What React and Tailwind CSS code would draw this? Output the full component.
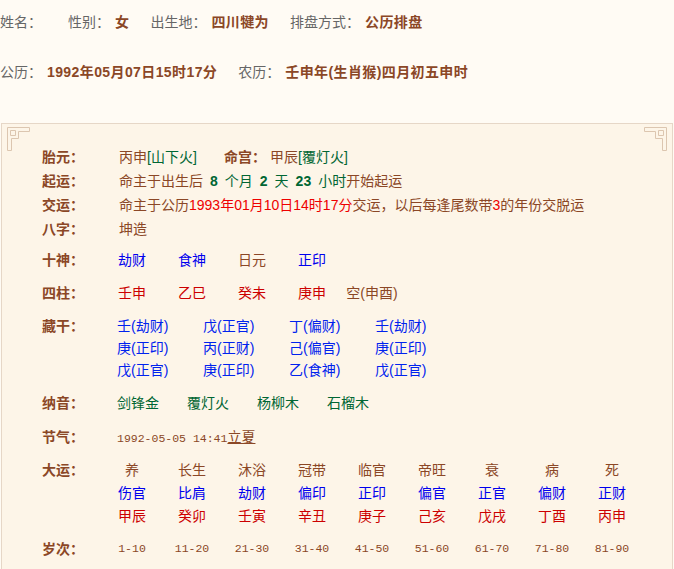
import React from 'react';

const BROWN = 'text-[#8b4726]';
const MONO = "font-['Liberation_Mono','Noto_Sans_CJK_SC',monospace]";

const shishen = ['劫财', '食神', '日元', '正印'];
const sizhu = ['壬申', '乙巳', '癸未', '庚申'];
const canggan = [
    ['壬(劫财)', '庚(正印)', '戊(正官)'],
    ['戊(正官)', '丙(正财)', '庚(正印)'],
    ['丁(偏财)', '己(偏官)', '乙(食神)'],
    ['壬(劫财)', '庚(正印)', '戊(正官)'],
];
const nayin = ['剑锋金', '覆灯火', '杨柳木', '石榴木'];
const dayun = [
    { stage: '养', god: '伤官', gz: '甲辰', age: '1-10' },
    { stage: '长生', god: '比肩', gz: '癸卯', age: '11-20' },
    { stage: '沐浴', god: '劫财', gz: '壬寅', age: '21-30' },
    { stage: '冠带', god: '偏印', gz: '辛丑', age: '31-40' },
    { stage: '临官', god: '正印', gz: '庚子', age: '41-50' },
    { stage: '帝旺', god: '偏官', gz: '己亥', age: '51-60' },
    { stage: '衰', god: '正官', gz: '戊戌', age: '61-70' },
    { stage: '病', god: '偏财', gz: '丁酉', age: '71-80' },
    { stage: '死', god: '正财', gz: '丙申', age: '81-90' },
];

const Field = ({ label, value }) => (
    <>
        <span className="text-[#666]">{label}</span>
        <span className={`ml-[5px] mr-[21px] font-bold tracking-[0.4px] ${BROWN}`}>{value}</span>
    </>
);

const Label = ({ children, w }) => (
    <span className={`${w} shrink-0 font-bold ${BROWN}`}>{children}</span>
);

// fret-style corner ornament
const Corner = ({ flip }) => (
    <svg
        width="23"
        height="24"
        viewBox="0 0 23 24"
        className={`absolute top-[3px] ${flip ? 'right-[5px] -scale-x-100' : 'left-[5px]'}`}
        fill="none"
        stroke="#dcc6b0"
        strokeWidth="1"
    >
        <path d="M0.5 23.5V0.5H22.5V4.5H11.5V11.5H4.5V23.5Z" />
        <path d="M3.5 3.5H8.5V8.5H3.5Z" />
    </svg>
);

export default function App() {
    return (
        <div className="min-h-[569px] w-[674px] bg-[#fffbf4] text-[14px] font-['Liberation_Sans','Noto_Sans_CJK_SC',sans-serif]">
            {/* Header info */}
            <div className="flex h-[44px] items-center">
                <Field label="姓名：" value="" />
                <Field label="性别：" value="女" />
                <Field label="出生地：" value="四川犍为" />
                <Field label="排盘方式：" value="公历排盘" />
            </div>
            <div className="flex h-[56px] items-center">
                <Field label="公历：" value="1992年05月07日15时17分" />
                <Field label="农历：" value="壬申年(生肖猴)四月初五申时" />
            </div>

            {/* Chart panel */}
            <div className="relative mx-[1px] mt-[23px] border border-[#e6d7c7] bg-[#fdf5e8] pl-[40px] pb-[12px] pt-[21px]">
                <Corner />
                <Corner flip />

                <div className="flex h-[24px] items-center">
                    <Label w="w-[77px]">胎元：</Label>
                    <span className={`w-[105px] ${BROWN}`}>
                        丙申<span className="text-[#006633]">[山下火]</span>
                    </span>
                    <Label w="w-[46px]">命宫：</Label>
                    <span className={BROWN}>
                        甲辰<span className="text-[#006633]">[覆灯火]</span>
                    </span>
                </div>

                <div className="flex h-[24px] items-center">
                    <Label w="w-[77px]">起运：</Label>
                    <span className={BROWN}>
                        命主于出生后
                        <b className="mx-[7px] text-[#006633]">8</b>
                        <span className="text-[#006633]">个月</span>
                        <b className="mx-[7px] text-[#006633]">2</b>
                        <span className="text-[#006633]">天</span>
                        <b className="mx-[7px] text-[#006633]">23</b>
                        <span className="text-[#006633]">小时</span>
                        开始起运
                    </span>
                </div>

                <div className="flex h-[24px] items-center">
                    <Label w="w-[77px]">交运：</Label>
                    <span className={BROWN}>
                        命主于公历<span className="text-[#ee0000]">1993年01月10日14时17分</span>交运，以后每逢尾数带<span className="text-[#ee0000]">3</span>的年份交脱运
                    </span>
                </div>

                <div className="flex h-[24px] items-center">
                    <Label w="w-[77px]">八字：</Label>
                    <span className={BROWN}>坤造</span>
                </div>

                <div className="flex h-[38px] items-center">
                    <Label w="w-[60px]">十神：</Label>
                    {shishen.map((s) => (
                        <span
                            key={s}
                            className={`w-[60px] text-center ${s === '日元' ? BROWN : 'text-[#0000ee]'}`}
                        >
                            {s}
                        </span>
                    ))}
                </div>

                <div className="flex h-[28px] items-center">
                    <Label w="w-[60px]">四柱：</Label>
                    {sizhu.map((s) => (
                        <span key={s} className="w-[60px] text-center text-[#cc0000]">
                            {s}
                        </span>
                    ))}
                    <span className={`w-[60px] text-center ${BROWN}`}>空(申酉)</span>
                </div>

                <div className="mt-[8px] flex items-start leading-[22px]">
                    <Label w="w-[75px]">藏干：</Label>
                    {canggan.map((col, i) => (
                        <div key={i} className="flex w-[86px] flex-col text-[#0022ee]">
                            {col.map((c, j) => (
                                <span key={j}>{c}</span>
                            ))}
                        </div>
                    ))}
                </div>

                <div className="flex h-[44px] items-center">
                    <Label w="w-[75px]">纳音：</Label>
                    {nayin.map((n) => (
                        <span key={n} className="w-[70px] text-[#006633]">
                            {n}
                        </span>
                    ))}
                </div>

                <div className="flex h-[24px] items-center">
                    <Label w="w-[75px]">节气：</Label>
                    <span className={BROWN}>
                        <span className={`${MONO} text-[11.5px]`}>1992-05-05 14:41</span>
                        <span className="underline">立夏</span>
                    </span>
                </div>

                <div className="mt-[10px] flex items-start leading-[23px]">
                    <Label w="w-[60px]">大运：</Label>
                    {dayun.map((d) => (
                        <div key={d.age} className="flex w-[60px] flex-col text-center">
                            <span className={BROWN}>{d.stage}</span>
                            <span className="text-[#0000ee]">{d.god}</span>
                            <span className="text-[#cc0000]">{d.gz}</span>
                        </div>
                    ))}
                </div>

                <div className="flex h-[42px] items-center">
                    <Label w="w-[60px]">岁次：</Label>
                    {dayun.map((d) => (
                        <span key={d.age} className={`w-[60px] text-center text-[11.5px] ${MONO} ${BROWN}`}>
                            {d.age}
                        </span>
                    ))}
                </div>
            </div>
        </div>
    );
}
